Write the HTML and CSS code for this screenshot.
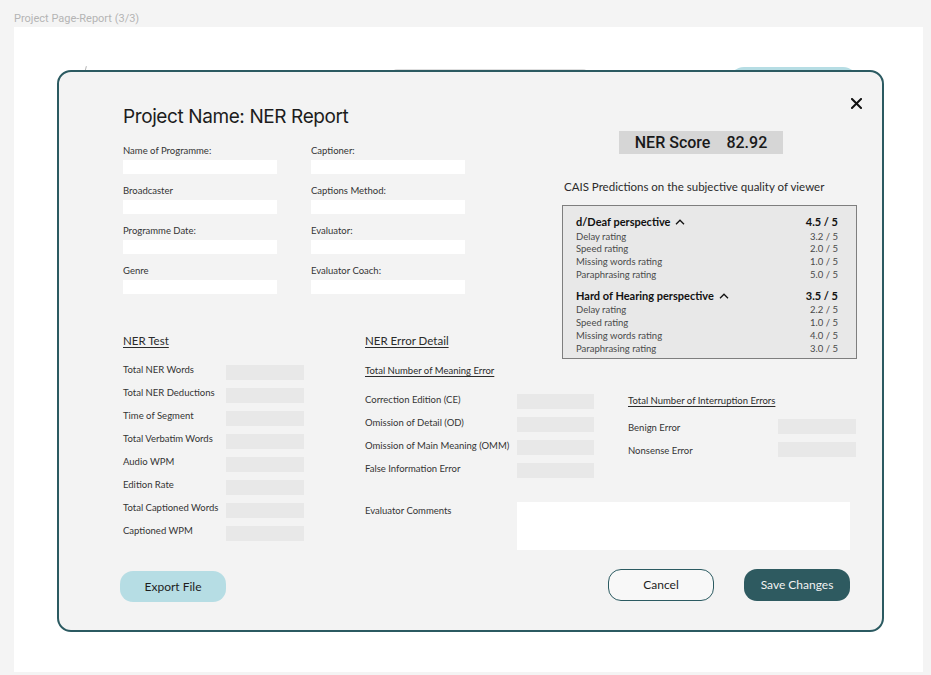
FILE: index.html
```html
<!DOCTYPE html>
<html lang="en">
<head>
<meta charset="utf-8">
<title>Project Page-Report (3/3)</title>
<link rel="stylesheet" href="styles.css">
</head>
<body>
<div class="page-label">Project Page-Report (3/3)</div>
<div class="frame">
  <div class="backdrop">
    <span class="tick"></span>
    <span class="ghost-bar"></span>
    <span class="ghost-btn"></span>
  </div>

  <div class="modal">
    <button class="close" aria-label="Close">
      <svg viewBox="0 0 11 11" width="11" height="11"><path d="M1 1 L10 10 M10 1 L1 10" stroke="#111" stroke-width="2" fill="none" stroke-linecap="square"/></svg>
    </button>

    <div class="layout">
      <section class="intro">
        <h1 class="title">Project Name: NER Report</h1>
        <div class="form">
          <div class="field"><label>Name of Programme:</label><div class="input"></div></div>
          <div class="field"><label>Captioner:</label><div class="input"></div></div>
          <div class="field"><label>Broadcaster</label><div class="input"></div></div>
          <div class="field"><label>Captions Method:</label><div class="input"></div></div>
          <div class="field"><label>Programme Date:</label><div class="input"></div></div>
          <div class="field"><label>Evaluator:</label><div class="input"></div></div>
          <div class="field"><label>Genre</label><div class="input"></div></div>
          <div class="field"><label>Evaluator Coach:</label><div class="input"></div></div>
        </div>
      </section>

      <section class="summary">
        <div class="score"><span>NER Score</span><span>82.92</span></div>
        <p class="cais-title">CAIS Predictions on the subjective quality of viewer</p>
        <div class="cais-box">
          <div class="group">
            <div class="group-head"><span class="gh-name">d/Deaf perspective <svg class="chev" viewBox="0 0 10 6" width="10" height="6"><path d="M1 5.2 L5 1.2 L9 5.2" stroke="#111" stroke-width="1.3" fill="none"/></svg></span><span>4.5 / 5</span></div>
            <div class="rating"><span>Delay rating</span><span>3.2 / 5</span></div>
            <div class="rating"><span>Speed rating</span><span>2.0 / 5</span></div>
            <div class="rating"><span>Missing words rating</span><span>1.0 / 5</span></div>
            <div class="rating"><span>Paraphrasing rating</span><span>5.0 / 5</span></div>
          </div>
          <div class="group group-2">
            <div class="group-head"><span class="gh-name">Hard of Hearing perspective <svg class="chev" viewBox="0 0 10 6" width="10" height="6"><path d="M1 5.2 L5 1.2 L9 5.2" stroke="#111" stroke-width="1.3" fill="none"/></svg></span><span>3.5 / 5</span></div>
            <div class="rating"><span>Delay rating</span><span>2.2 / 5</span></div>
            <div class="rating"><span>Speed rating</span><span>1.0 / 5</span></div>
            <div class="rating"><span>Missing words rating</span><span>4.0 / 5</span></div>
            <div class="rating"><span>Paraphrasing rating</span><span>3.0 / 5</span></div>
          </div>
        </div>
      </section>

      <section class="test">
        <h2 class="sec-head">NER Test</h2>
        <div class="rows test-rows">
          <div class="row"><span class="lbl">Total NER Words</span><span class="box"></span></div>
          <div class="row"><span class="lbl">Total NER Deductions</span><span class="box"></span></div>
          <div class="row"><span class="lbl">Time of Segment</span><span class="box"></span></div>
          <div class="row"><span class="lbl">Total Verbatim Words</span><span class="box"></span></div>
          <div class="row"><span class="lbl">Audio WPM</span><span class="box"></span></div>
          <div class="row"><span class="lbl">Edition Rate</span><span class="box"></span></div>
          <div class="row"><span class="lbl">Total Captioned Words</span><span class="box"></span></div>
          <div class="row"><span class="lbl">Captioned WPM</span><span class="box"></span></div>
        </div>
      </section>

      <section class="detail">
        <h2 class="sec-head">NER Error Detail</h2>
        <h3 class="sub-head">Total Number of Meaning Error</h3>
      </section>

      <section class="meaning">
        <div class="rows meaning-rows">
          <div class="row"><span class="lbl">Correction Edition (CE)</span><span class="box"></span></div>
          <div class="row"><span class="lbl">Omission of Detail (OD)</span><span class="box"></span></div>
          <div class="row"><span class="lbl">Omission of Main Meaning (OMM)</span><span class="box"></span></div>
          <div class="row"><span class="lbl">False Information Error</span><span class="box"></span></div>
        </div>
      </section>

      <section class="interrupt">
        <h3 class="sub-head">Total Number of Interruption Errors</h3>
        <div class="rows interrupt-rows">
          <div class="row"><span class="lbl">Benign Error</span><span class="box"></span></div>
          <div class="row"><span class="lbl">Nonsense Error</span><span class="box"></span></div>
        </div>
      </section>

      <section class="comments">
        <span class="comments-label">Evaluator Comments</span>
        <div class="textarea"></div>
      </section>
    </div>

    <div class="footer">
      <button class="btn btn-export">Export File</button>
      <button class="btn btn-cancel">Cancel</button>
      <button class="btn btn-save">Save Changes</button>
    </div>
  </div>
</div>
</body>
</html>
```

FILE: styles.css
```css
* { box-sizing: border-box; }

body {
  margin: 0;
  background: #f4f4f4;
  font-family: Lato, "Liberation Sans", sans-serif;
  color: #2b2b2b;
}

.page-label {
  height: 27px;
  padding: 12px 0 0 14px;
  font-family: Roboto, "Liberation Sans", sans-serif;
  font-size: 11px;
  line-height: 14px;
  color: #b4b4b4;
}

.frame {
  position: relative;
  margin: 0 8px 0 14px;
  height: 645px;
  background: #ffffff;
}

.backdrop {
  display: flex;
  align-items: flex-start;
  padding-top: 39px;
}

.tick {
  margin-left: 71px;
  width: 1px;
  height: 7px;
  background: #b8b8b8;
  transform: rotate(15deg);
}

.ghost-bar {
  margin-left: 307px;
  margin-top: 3px;
  width: 194px;
  height: 24px;
  border-radius: 4px;
  background: #dedede;
}

.ghost-btn {
  margin-left: 143px;
  margin-top: 1px;
  width: 127px;
  height: 32px;
  border-radius: 14px;
  background: #b6dde4;
}

.modal {
  position: absolute;
  left: 43px;
  top: 43px;
  width: 827px;
  border: 2px solid #2b5a61;
  border-radius: 14px;
  background: #f3f3f3;
  padding: 33px 25px 28px 61px;
}

.close {
  position: absolute;
  top: 26px;
  right: 20px;
  width: 11px;
  height: 11px;
  padding: 0;
  border: 0;
  background: none;
  display: flex;
}

.layout {
  display: grid;
  padding-left: 3px;
  grid-template-columns: 242px 197px 66px 229px;
  grid-template-areas:
    "intro intro summary summary"
    "test detail summary summary"
    "test meaning meaning interrupt"
    "test comments comments comments";
  align-items: start;
}

.intro { grid-area: intro; }
.summary { grid-area: summary; }
.test { grid-area: test; padding-top: 40px; }
.detail { grid-area: detail; padding-top: 40px; }
.meaning { grid-area: meaning; padding-top: 17px; }
.interrupt { grid-area: interrupt; padding-top: 18px; }
.comments { grid-area: comments; padding-top: 24px; display: grid; grid-template-columns: 152px 333px; }

.title {
  margin: 0;
  font-family: Inter, "Open Sans", sans-serif;
  font-weight: 400;
  font-size: 19px;
  line-height: 24px;
  letter-spacing: -0.4px;
  color: #1c1c1c;
}

.form {
  margin-top: 16px;
  display: grid;
  grid-template-columns: 154px 154px;
  column-gap: 34px;
  row-gap: 11px;
}

.field label {
  display: block;
  font-size: 9.5px;
  line-height: 12px;
  color: #333;
}

.input {
  margin-top: 3px;
  height: 14px;
  background: #ffffff;
}

.score {
  margin: 26px 0 0 57px;
  width: 164px;
  height: 23px;
  background: #d6d6d6;
  display: flex;
  align-items: center;
  justify-content: center;
  gap: 16px;
  font-family: Roboto, "Liberation Sans", sans-serif;
  font-weight: 500;
  font-size: 16px;
  color: #1a1a1a;
}

.cais-title {
  margin: 26px 0 0 2px;
  font-size: 11.5px;
  line-height: 14px;
  color: #2b2b2b;
}

.cais-box {
  margin-top: 11px;
  border: 1px solid #7e7e7e;
  background: #e8e8e8;
  padding: 9px 18px 3px 13px;
}

.group-2 { margin-top: 7.6px; }

.group-head {
  display: flex;
  justify-content: space-between;
  font-weight: 700;
  font-size: 11px;
  line-height: 14px;
  color: #111;
  margin-bottom: 1.5px;
}

.gh-name { display: flex; align-items: center; gap: 5px; }
.chev { display: block; }

.rating {
  display: flex;
  justify-content: space-between;
  font-size: 9.5px;
  line-height: 12.7px;
  color: #4a4a4a;
}

.sec-head {
  margin: 0;
  font-weight: 400;
  font-size: 11.5px;
  line-height: 14px;
  text-decoration: underline;
  text-underline-offset: 2px;
  color: #2b2b2b;
}

.sub-head {
  margin: 0;
  font-weight: 400;
  font-size: 9.5px;
  line-height: 12px;
  text-decoration: underline;
  text-underline-offset: 1.5px;
  color: #2b2b2b;
}

.detail .sub-head { margin-top: 17px; }

.rows { display: flex; flex-direction: column; }

.row {
  display: grid;
  align-items: center;
  font-size: 9.5px;
  line-height: 12px;
  color: #333;
}

.test-rows .lbl { padding-bottom: 5px; }
.meaning-rows .lbl { padding-bottom: 3px; }

.box { display: block; background: #e8e8e8; }

.test-rows { margin-top: 16px; gap: 8px; }
.test-rows .row { grid-template-columns: 103px 78px; height: 15px; }
.test-rows .box { height: 15px; }

.meaning-rows { gap: 8.5px; }
.meaning-rows .row { grid-template-columns: 152px 77px; height: 14.5px; }
.meaning-rows .box { height: 14.5px; }

.interrupt-rows { margin-top: 12px; gap: 8px; }
.interrupt-rows .row { grid-template-columns: 150px 78px; height: 15px; }
.interrupt-rows .box { height: 15px; }
.interrupt-rows .lbl { padding-top: 3px; }

.comments-label {
  margin-top: 3px;
  font-size: 9.5px;
  line-height: 12px;
  color: #333;
}

.textarea {
  height: 48px;
  background: #ffffff;
}

.footer {
  display: flex;
  align-items: center;
  margin-top: 18px;
  padding-right: 7px;
}

.btn {
  font-family: Lato, "Liberation Sans", sans-serif;
  font-size: 12px;
  width: 106px;
  height: 32px;
  border-radius: 13px;
  padding: 0;
  cursor: pointer;
}

.btn-export {
  height: 31px;
  margin-top: 3px;
  border: 0;
  background: #b6dde4;
  color: #1e1e1e;
}

.btn-cancel {
  margin-left: auto;
  border: 1px solid #2b5a61;
  background: #f8f8f8;
  color: #1e1e1e;
}

.btn-save {
  margin-left: 30px;
  border: 0;
  background: #2e5a60;
  color: #f2f2f2;
}
```
